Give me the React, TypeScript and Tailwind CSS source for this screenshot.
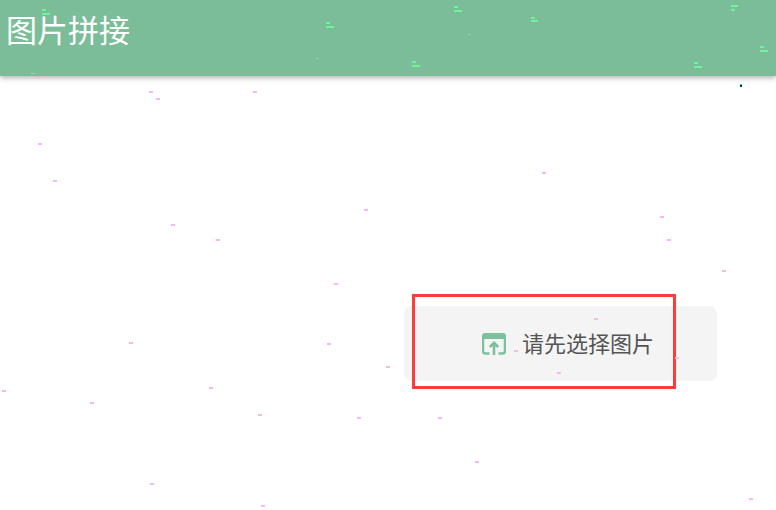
const GREEN_SPECKS = [
  [42, 9, 4, 2], [42, 13, 8, 2],
  [326, 22, 4, 2], [326, 26, 8, 2],
  [454, 6, 4, 2], [454, 10, 8, 2],
  [531, 17, 4, 2], [531, 20, 7, 2],
  [731, 5, 7, 2], [731, 9, 4, 2],
  [760, 46, 4, 2], [760, 50, 8, 2],
  [412, 61, 4, 2], [412, 65, 8, 2],
  [694, 62, 4, 2], [694, 66, 8, 2],
  [468, 34, 2, 1], [316, 58, 2, 1], [31, 73, 2, 1], [33, 73, 2, 1],
]

const PINK_SPECKS = [
  [149, 91], [156, 98], [253, 91], [38, 143], [53, 180], [171, 224], [216, 239],
  [364, 209], [542, 172], [660, 216], [667, 239], [722, 270], [334, 283], [594, 318],
  [129, 342], [327, 343], [514, 350], [675, 357], [386, 366], [557, 372], [2, 390],
  [209, 387], [90, 402], [258, 414], [357, 417], [438, 417], [475, 461], [150, 483],
  [261, 505], [749, 498],
]

function UploadIcon() {
  return (
    <svg width="24" height="22" viewBox="0 0 24 22" fill="none">
      <path d="M0 6V3a3 3 0 0 1 3-3h18a3 3 0 0 1 3 3v3z" fill="#7cc09c" />
      <path
        d="M7.500 20.500H3.500a2.500 2.500 0 0 1-2.500-2.500V5M23 5v13a2.500 2.500 0 0 1-2.500 2.500h-4"
        stroke="#7cc09c"
        strokeWidth="2.500"
      />
      <path d="M12 22V10.500M7.800 14l4.200-4.200 4.200 4.200" stroke="#7cc09c" strokeWidth="2.600" />
    </svg>
  )
}

export default function App() {
  return (
    <div className="relative h-[510px] w-[776px] overflow-hidden bg-white font-['Noto_Sans_CJK_SC','Noto_Sans',sans-serif]">
      {/* Header */}
      <header className="flex h-[76px] items-center bg-[#7bbd99] pb-[19px] pl-[6px] shadow-[0_2px_5px_rgba(0,0,0,0.3)]">
        <h1 className="text-[31px] font-normal leading-none text-white">图片拼接</h1>
      </header>

      {/* Placeholder card */}
      <main className="flex justify-end pr-[59px] pt-[230px]">
        <div className="flex h-[75px] w-[313px] items-center gap-[16px] rounded-lg bg-[#f4f4f4] pl-[78px]">
          <UploadIcon />
          <span className="pb-1 text-[22px] leading-none text-[#555555]">请先选择图片</span>
        </div>
      </main>

      {/* Annotation box */}
      <div className="absolute left-[412px] top-[294px] h-[95px] w-[264px] border-[3px] border-[#ff3b3b]" />

      {/* Screen noise */}
      {GREEN_SPECKS.map(([x, y, w, h]) => (
        <span
          key={`g${x}-${y}`}
          className="absolute bg-[#6ef59a]"
          style={{ left: x, top: y, width: w, height: h }}
        />
      ))}
      {PINK_SPECKS.map(([x, y]) => (
        <span
          key={`p${x}-${y}`}
          className="absolute h-[2px] w-[4px] bg-[#f5b8f5]"
          style={{ left: x, top: y }}
        />
      ))}
      <span className="absolute left-[740px] top-[84px] h-[2px] w-[2px] bg-[#00e0e0]" />
      <span className="absolute left-[740px] top-[85px] h-[2px] w-[2px] bg-[#003333]" />
    </div>
  )
}
